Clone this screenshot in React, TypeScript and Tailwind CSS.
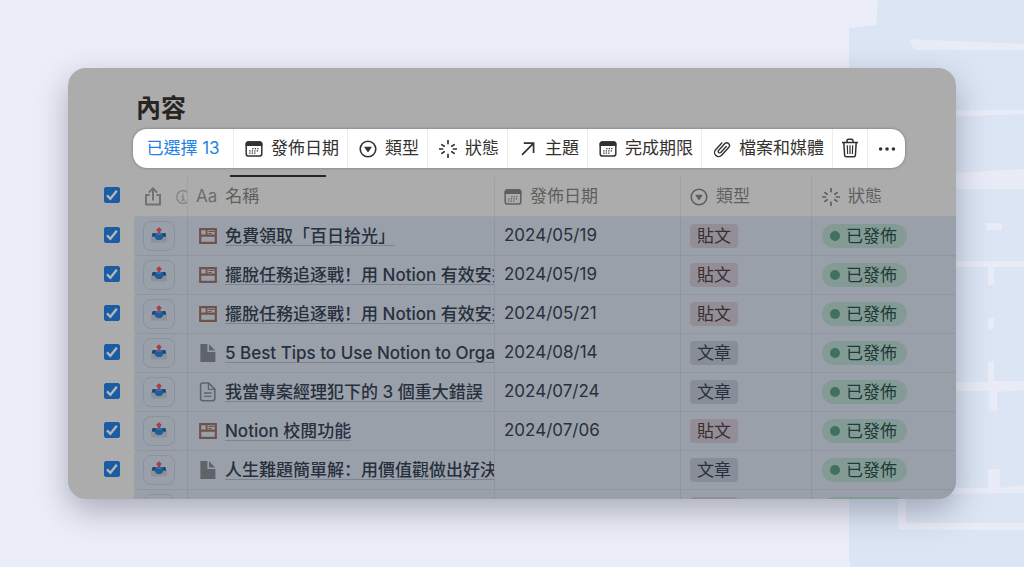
import React, { useState } from 'react';

type IconName = 'calendar' | 'select' | 'status' | 'relation' | 'clip';
type PageIcon = 'post' | 'page' | 'doc';

interface ContentRow {
  id: number;
  title: string;
  icon: PageIcon;
  date: string;
  type: '貼文' | '文章';
}

const rows: ContentRow[] = [
  { id: 1, title: '免費領取「百日拾光」', icon: 'post', date: '2024/05/19', type: '貼文' },
  { id: 2, title: '擺脫任務追逐戰！用 Notion 有效安排', icon: 'post', date: '2024/05/19', type: '貼文' },
  { id: 3, title: '擺脫任務追逐戰！用 Notion 有效安排', icon: 'post', date: '2024/05/21', type: '貼文' },
  { id: 4, title: '5 Best Tips to Use Notion to Organ', icon: 'page', date: '2024/08/14', type: '文章' },
  { id: 5, title: '我當專案經理犯下的 3 個重大錯誤', icon: 'doc', date: '2024/07/24', type: '文章' },
  { id: 6, title: 'Notion 校閱功能', icon: 'post', date: '2024/07/06', type: '貼文' },
  { id: 7, title: '人生難題簡單解：用價值觀做出好決', icon: 'page', date: '', type: '文章' },
  { id: 8, title: '', icon: 'post', date: '', type: '貼文' },
];

const actions: { icon: IconName; label: string }[] = [
  { icon: 'calendar', label: '發佈日期' },
  { icon: 'select', label: '類型' },
  { icon: 'status', label: '狀態' },
  { icon: 'relation', label: '主題' },
  { icon: 'calendar', label: '完成期限' },
  { icon: 'clip', label: '檔案和媒體' },
];

function PropertyIcon({ name }: { name: IconName }) {
  return (
    <svg viewBox="0 0 18 18" className="h-[18px] w-[18px] shrink-0" fill="none" stroke="currentColor" strokeWidth="1.6">
      {name === 'calendar' && (
        <>
          <rect x="1.2" y="1.9" width="15.6" height="14.2" rx="2.4" strokeWidth="1.5" />
          <path d="M.6 6V4a2.800 2.800 0 0 1 2.800-2.800h11.200A2.800 2.800 0 0 1 17.400 4v2z" fill="currentColor" stroke="none" />
          <path d="M7.2 8.600h7M4.200 10.900h10M4.200 13.200h7.400" strokeWidth="1.300" strokeDasharray="1.3 1.2" />
        </>
      )}
      {name === 'select' && (
        <>
          <circle cx="9" cy="9" r="7.800" />
          <path d="M5.700 6.700h6.600a.4.4 0 0 1 .3.6l-3.200 4.700a.5.5 0 0 1-.8 0L5.400 7.300a.4.4 0 0 1 .3-.6z" fill="currentColor" stroke="none" />
        </>
      )}
      {name === 'status' && (
        <path
          d="M9 .6v3M9 14.400v3M.6 9h3M14.400 9h3M2.800 4.600l2.400 1.600M12.800 6.200l2.400-1.600M2.800 13.400l2.400-1.600M12.800 11.800l2.400 1.600"
          strokeWidth="1.700"
          strokeLinecap="round"
        />
      )}
      {name === 'relation' && <path d="M3 14.800 14.400 3.400M4.800 3.200h9.800V13" strokeWidth="1.700" />}
      {name === 'clip' && (
        <path
          d="M13.200 6.600 7.800 12.400a1.500 1.500 0 0 1-2.300-2l6.400-6.800a2.700 2.700 0 0 1 4 3.600l-7.300 8a4 4 0 0 1-6-5.400l6.200-6.800"
          strokeWidth="1.400"
          strokeLinecap="round"
        />
      )}
    </svg>
  );
}

function TitleIcon({ name }: { name: PageIcon }) {
  if (name === 'post') {
    return (
      <svg viewBox="0 0 18 18" className="h-[18px] w-[18px] shrink-0 text-[#70524d]" fill="none" stroke="currentColor">
        <path d="M1.200 2.200h15.600v13.600H1.200zM1 8.700h16" strokeWidth="2.200" />
        <path d="M7.600 2v6.500" strokeWidth="1.800" />
        <path d="M9.400 4.500h6M9.400 6.500h3.400" strokeWidth="1.200" />
      </svg>
    );
  }
  if (name === 'page') {
    return (
      <svg viewBox="0 0 18 18" className="h-[18px] w-[18px] shrink-0 text-[#5f636a]" fill="currentColor">
        <path d="M1.400 0h7v8h8v10h-15z" />
        <path d="M10 .2 16.200 6.600H10z" />
      </svg>
    );
  }
  return (
    <svg viewBox="0 0 18 20" className="h-5 w-[18px] shrink-0 text-[#5f636a]" fill="none" stroke="currentColor" strokeWidth="1.600">
      <path d="M3.800 1h5.800l6.200 6.200v9.400a2.200 2.200 0 0 1-2.200 2.200H3.800a2.200 2.200 0 0 1-2.200-2.200V3.200A2.200 2.200 0 0 1 3.800 1z" />
      <path d="M9.400 1.400v6h6M5 11h7.600M5 14.400h7.600" strokeWidth="1.300" />
    </svg>
  );
}

function OutboxIcon() {
  return (
    <svg viewBox="0 0 16 16" className="h-4 w-4">
      <path d="M.6 9h14.800l.6 1v4.200a1.200 1.200 0 0 1-1.200 1.200H1.200A1.200 1.200 0 0 1 0 14.200V10z" fill="#8c919a" />
      <path d="M1.800 6h12.400L15.200 9.600l-2.900.3c-.5 2-1.800 3.200-4.300 3.200S4.200 11.900 3.700 9.900L.8 9.600z" fill="#205d99" />
      <path d="M1.800 6h1.800l.8 2.600L.8 9.400zM14.200 6h-1.800l-.8 2.600 3.600.8z" fill="#29435f" />
      <path d="M5.400 6h5.200L10 8H6z" fill="#3473aa" />
      <path d="M8 .2 11 3.100 9.400 4.300v1.900H6.600V4.300L5 3.100z" fill="#a83e46" />
    </svg>
  );
}

function Checkbox({ label, checked, onChange }: { label: string; checked: boolean; onChange: () => void }) {
  return (
    <label className="relative ml-9 block h-4 w-4">
      <input
        type="checkbox"
        aria-label={label}
        checked={checked}
        onChange={onChange}
        className="peer block h-4 w-4 appearance-none rounded-[2px] border border-[#777] checked:border-[#1c5ca3] checked:bg-[#1c5ca3]"
      />
      <svg
        viewBox="0 0 16 16"
        className="pointer-events-none absolute inset-0 hidden h-4 w-4 text-[#b4b8bd] peer-checked:block"
        fill="none"
        stroke="currentColor"
        strokeWidth="2.300"
      >
        <path d="M3 8.400 6.400 11.800 12.800 3.800" />
      </svg>
    </label>
  );
}

function Backdrop() {
  return (
    <svg
      viewBox="0 0 1024 567"
      preserveAspectRatio="xMaxYMin slice"
      className="absolute inset-0 h-full w-full"
      aria-hidden="true"
    >
      <path d="M878 0h146v567H851l-2-7V28l27-3z" fill="#dbe5f3" />
      <g fill="#e9ecf7">
        <path d="M910 39l114 5v6H917q-5 0-7-11z" />
        <path d="M940 110h84v4l-84 3z" />
        <path d="M940 174l84-5v20h-84z" />
        <path d="M986 223h16v7h-16z" />
        <path d="M940 261h84v6h-30v18h-6v-18h-48z" />
        <path d="M988 318h6v11h-6z" />
        <path d="M988 362l6-1v20h30v9l-27 2v19h-8v-20h-49v-9h48z" />
        <path d="M988 469h12v19l24-3v8l-84 1v-6h48z" />
        <path d="M898 490h8v33h118v7H904q-6 0-6-5z" />
      </g>
    </svg>
  );
}

export default function App() {
  const [selected, setSelected] = useState<number[]>(rows.map(row => row.id));
  const allSelected = selected.length === rows.length;

  const toggleRow = (id: number) => {
    setSelected(selected.includes(id) ? selected.filter(item => item !== id) : [...selected, id]);
  };

  const toggleAll = () => {
    setSelected(allSelected ? [] : rows.map(row => row.id));
  };

  return (
    <div className="relative h-screen overflow-hidden bg-[#ebedf8] p-[68px] font-[Inter,'Noto_Sans_CJK_TC',sans-serif] text-[17px]">
      <Backdrop />

      <main className="relative h-full overflow-hidden rounded-[18px] bg-[#acacac] pt-6 shadow-[0_12px_32px_rgba(50,50,70,0.35)]">
        <h1 className="ml-[68px] text-[25px] leading-8 font-bold text-[#262522]">內容</h1>

        {/* Bulk actions */}
        <div className="mt-[5px] ml-[65px] flex h-[39px] w-fit divide-x divide-[#ececec] overflow-hidden rounded-[14px] bg-white whitespace-nowrap text-[#33322e] shadow-[0_0_3px_rgba(0,0,0,0.35)]">
          <button className="w-[101px] text-center text-[#2383e2]">已選擇 13</button>
          {actions.map(action => (
            <button key={action.label} className="flex items-center gap-2 pr-2 pl-[11px]">
              <PropertyIcon name={action.icon} />
              <span>{action.label}</span>
            </button>
          ))}
          <button aria-label="刪除" className="flex w-[35px] items-center justify-center pb-[2px]">
            <svg viewBox="0 0 18 20" className="h-5 w-[18px]" fill="none" stroke="currentColor" strokeWidth="1.500">
              <path d="M1 4.400h16M6 4V2.600A1.400 1.400 0 0 1 7.400 1.200h3.200A1.400 1.400 0 0 1 12 2.600V4" />
              <path d="M2.800 4.600l.8 12.600a1.600 1.600 0 0 0 1.600 1.500h7.600a1.600 1.600 0 0 0 1.600-1.500l.8-12.600" />
              <path d="M6.300 7.200l.3 8.800M9 7.200V16M11.700 7.200l-.3 8.800" strokeWidth="1.200" />
            </svg>
          </button>
          <button aria-label="更多" className="flex w-[37px] items-center justify-center">
            <svg viewBox="0 0 18 4" className="h-1 w-[18px]" fill="currentColor">
              <circle cx="2.600" cy="2" r="1.800" />
              <circle cx="9" cy="2" r="1.800" />
              <circle cx="15.400" cy="2" r="1.800" />
            </svg>
          </button>
        </div>

        {/* Active view indicator */}
        <div className="mt-[7px] ml-[162px] h-[2px] w-24 bg-[#262522]" />

        <table className="w-full table-fixed border-separate border-spacing-0 whitespace-nowrap">
          <colgroup>
            <col className="w-[66px]" />
            <col className="w-[54px]" />
            <col className="w-[307px]" />
            <col className="w-[186px]" />
            <col className="w-[131px]" />
            <col />
          </colgroup>
          <thead className="text-left text-[#605f5c]">
            <tr className="h-10">
              <th className="p-0 pb-1">
                <Checkbox label="全選" checked={allSelected} onChange={toggleAll} />
              </th>
              <th className="overflow-hidden border-r border-b border-[#a1a1a1] p-0 font-normal">
                <div className="flex items-center gap-[14px] pl-[10px]">
                  <svg viewBox="0 0 18 20" className="h-5 w-[18px] shrink-0 text-[#73726f]" fill="none" stroke="currentColor" strokeWidth="2">
                    <path d="M5.600 8H2v9.600h14V8h-3.600M9 13.600V1.800M4.800 5.600 9 1.400l4.200 4.200" />
                  </svg>
                  <svg viewBox="0 0 14 14" className="h-[14px] w-[14px] shrink-0 text-[#82817f]" fill="none" stroke="currentColor" strokeWidth="1.200">
                    <circle cx="7" cy="7" r="6.300" />
                    <path d="M5.600 6h1.600v4M5.400 10.200h3.600M7 3.400v1.300" />
                  </svg>
                </div>
              </th>
              <th className="border-r border-b border-[#a1a1a1] p-0 font-normal">
                <div className="flex items-center gap-2 pl-2">
                  <span className="text-[#6d6c69]">Aa</span>
                  <span>名稱</span>
                </div>
              </th>
              <th className="border-r border-b border-[#a1a1a1] p-0 font-normal">
                <div className="flex items-center gap-2 pl-[9px]">
                  <PropertyIcon name="calendar" />
                  <span>發佈日期</span>
                </div>
              </th>
              <th className="border-r border-b border-[#a1a1a1] p-0 font-normal">
                <div className="flex items-center gap-2 pl-[9px]">
                  <PropertyIcon name="select" />
                  <span>類型</span>
                </div>
              </th>
              <th className="border-b border-[#a1a1a1] p-0 font-normal">
                <div className="flex items-center gap-2 pl-[10px]">
                  <PropertyIcon name="status" />
                  <span>狀態</span>
                </div>
              </th>
            </tr>
          </thead>
          <tbody className="text-[#27303c]">
            {rows.map(row => (
              <tr key={row.id} className="h-[39px]">
                <td className="p-0 pb-1">
                  <Checkbox
                    label={row.title || '未命名'}
                    checked={selected.includes(row.id)}
                    onChange={() => toggleRow(row.id)}
                  />
                </td>
                <td className="rounded-l-[3px] border-r border-b border-[#8f96a0] bg-[#9aa0aa] p-0">
                  <button aria-label="發佈" className="ml-[9px] flex h-[30px] w-8 items-center justify-center rounded-lg border border-[#8c929c] pb-[2px]">
                    <OutboxIcon />
                  </button>
                </td>
                <td className="overflow-hidden border-r border-b border-[#8f96a0] bg-[#9aa0aa] p-0">
                  <div className="flex items-center gap-2 overflow-hidden pl-[11px]">
                    <TitleIcon name={row.icon} />
                    <a
                      href="#"
                      className="shrink-0 border-b border-[#7d848f] font-[Inter,'Noto_Sans_CJK_SC',sans-serif] leading-[18px] font-medium"
                    >
                      {row.title}
                    </a>
                  </div>
                </td>
                <td className="border-r border-b border-[#8f96a0] bg-[#9aa0aa] p-0 pl-[9px]">{row.date}</td>
                <td className="border-r border-b border-[#8f96a0] bg-[#9aa0aa] p-0 pl-[9px]">
                  <span
                    className={`block h-6 w-fit rounded px-[7px] leading-6 ${
                      row.type === '貼文' ? 'bg-[#928d96] text-[#38302f]' : 'bg-[#888e97]'
                    }`}
                  >
                    {row.type}
                  </span>
                </td>
                <td className="border-b border-[#8f96a0] bg-[#9aa0aa] p-0 pl-[10px]">
                  <span className="flex h-6 w-fit items-center gap-[6px] rounded-full bg-[#839a95] pr-[10px] pl-2 leading-6 text-[#1f3a38]">
                    <span className="h-[10px] w-[10px] rounded-full bg-[#42705f]" />
                    已發佈
                  </span>
                </td>
              </tr>
            ))}
          </tbody>
        </table>
      </main>
    </div>
  );
}
